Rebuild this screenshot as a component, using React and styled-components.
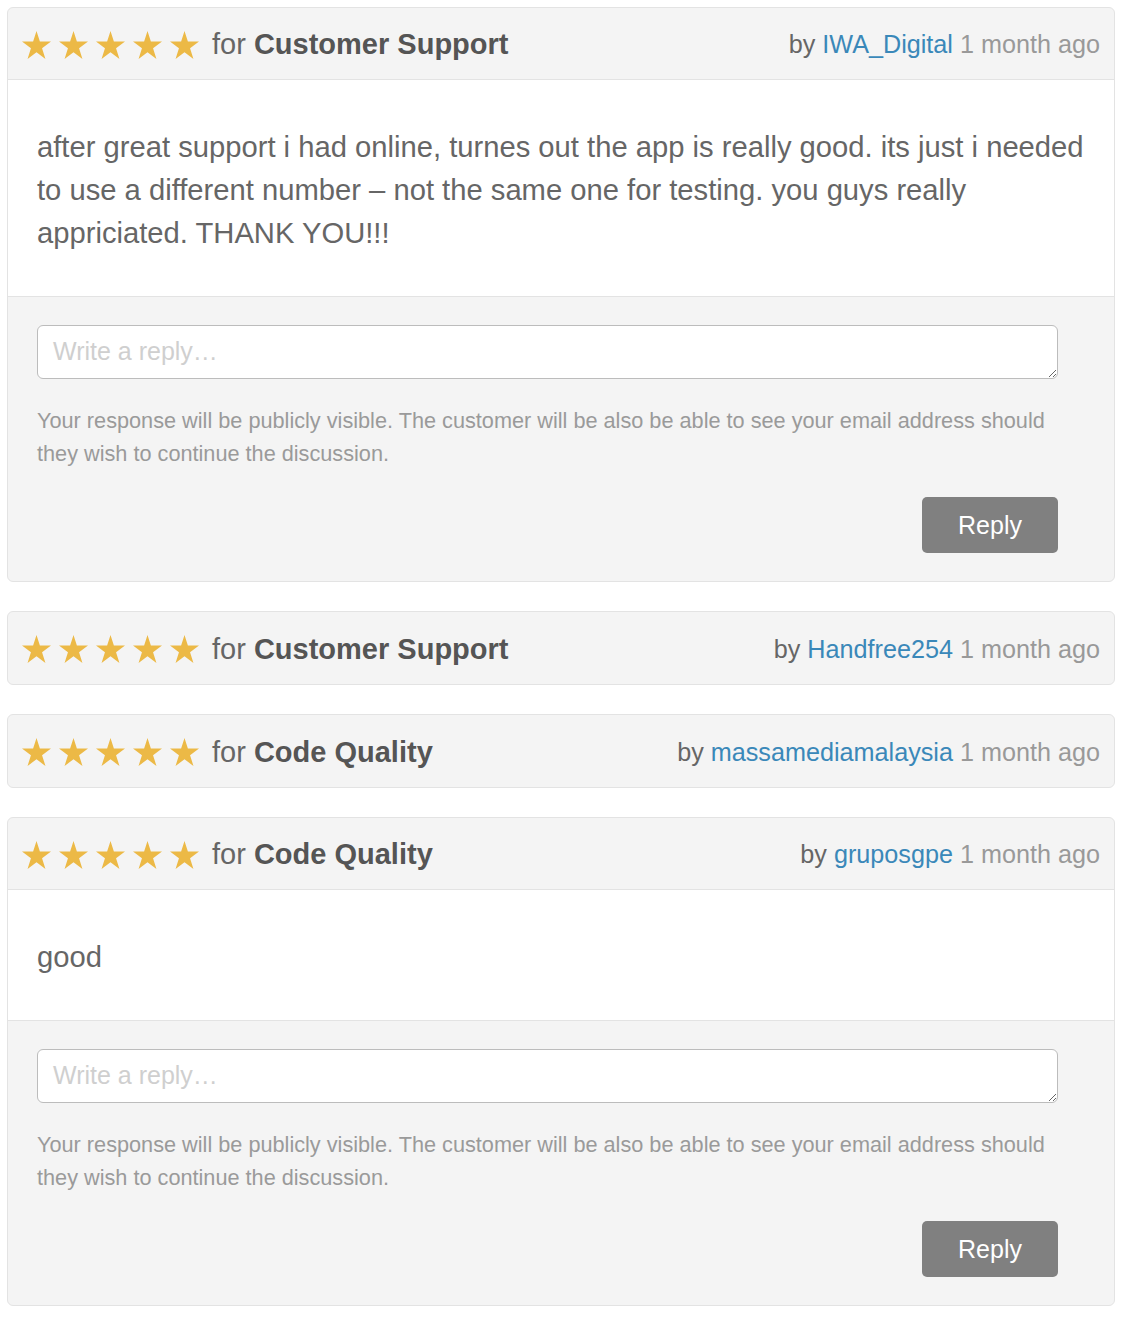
import React from "react"
import styled, { createGlobalStyle } from "styled-components"

const GlobalStyle = createGlobalStyle`
  body {
    margin: 0;
    background: #fff;
    font-family: "Liberation Sans", Arial, Helvetica, sans-serif;
    color: #666;
  }
`

const Page = styled.div`
  padding: 7px;
  display: flex;
  flex-direction: column;
  gap: 29px;
`

const Card = styled.section`
  border: 1px solid #e3e3e3;
  border-radius: 6px;
  background: #f4f4f4;
  overflow: hidden;
`

const Header = styled.header`
  height: 72px;
  box-sizing: border-box;
  display: flex;
  align-items: center;
  justify-content: space-between;
  padding: 2px 14px 0 14px;
  border-bottom: ${p => (p.$open ? "1px solid #e3e3e3" : "none")};
`

const Rating = styled.div`
  display: flex;
  align-items: center;
`

const Stars = styled.div`
  display: flex;
  gap: 8px;
  margin-right: 13px;
`

const Title = styled.div`
  font-size: 29px;
  color: #666;
  b {
    color: #555;
    font-weight: 700;
  }
`

const Meta = styled.div`
  font-size: 25.2px;
  color: #666;
`

const Author = styled.a`
  color: #3a88b9;
  text-decoration: none;
`

const Ago = styled.span`
  color: #999;
`

const Body = styled.div`
  background: #fff;
  padding: 46px 29px 41px;
  font-size: 29.2px;
  line-height: 43px;
  color: #666;
  border-bottom: 1px solid #e3e3e3;
`

const ReplyForm = styled.form`
  padding: 28px 56px 28px 29px;
  display: flex;
  flex-direction: column;
`

const ReplyInput = styled.textarea`
  display: block;
  box-sizing: border-box;
  width: 100%;
  height: 54px;
  border: 1px solid #bcbcbc;
  border-radius: 6px;
  padding: 10px 15px;
  font-family: "Liberation Sans", Arial, sans-serif;
  font-size: 25px;
  line-height: 31px;
  color: #555;
  background: #fff;
  resize: vertical;
  &::placeholder {
    color: #cfcfcf;
  }
`

const Help = styled.p`
  margin: 25px 0 0;
  font-size: 21.7px;
  line-height: 33px;
  color: #9a9a9a;
`

const Actions = styled.div`
  display: flex;
  justify-content: flex-end;
  margin-top: 27px;
`

const Button = styled.button`
  width: 136px;
  height: 56px;
  border: none;
  border-radius: 5px;
  background: #808080;
  color: #fff;
  font-family: "Liberation Sans", Arial, sans-serif;
  font-size: 25px;
`

function Star() {
  return (
    <svg width="29" height="28" viewBox="0 0 24 23">
      <polygon
        fill="#ecb946"
        points="12,0 14.8,8.6 24,8.7 16.6,14.1 19.4,23 12,17.6 4.6,23 7.4,14.1 0,8.7 9.2,8.6"
      />
    </svg>
  )
}

const reviews = [
  {
    topic: "Customer Support",
    author: "IWA_Digital",
    text: "after great support i had online, turnes out the app is really good. its just i needed to use a different number \u2013 not the same one for testing. you guys really appriciated. THANK YOU!!!",
  },
  { topic: "Customer Support", author: "Handfree254" },
  { topic: "Code Quality", author: "massamediamalaysia" },
  { topic: "Code Quality", author: "gruposgpe", text: "good" },
]

function Review({ topic, author, text }) {
  return (
    <Card>
      <Header $open={!!text}>
        <Rating>
          <Stars>
            {[0, 1, 2, 3, 4].map(i => (
              <Star key={i} />
            ))}
          </Stars>
          <Title>
            for <b>{topic}</b>
          </Title>
        </Rating>
        <Meta>
          by <Author href="#">{author}</Author> <Ago>1 month ago</Ago>
        </Meta>
      </Header>
      {text && (
        <>
          <Body>{text}</Body>
          <ReplyForm onSubmit={e => e.preventDefault()}>
            <ReplyInput placeholder="Write a reply…" />
            <Help>
              Your response will be publicly visible. The customer will be also be able to see your email address should they wish to continue the discussion.
            </Help>
            <Actions>
              <Button type="submit">Reply</Button>
            </Actions>
          </ReplyForm>
        </>
      )}
    </Card>
  )
}

function App() {
  return (
    <Page>
      <GlobalStyle />
      {reviews.map((r, i) => (
        <Review key={i} {...r} />
      ))}
    </Page>
  )
}

export default App
